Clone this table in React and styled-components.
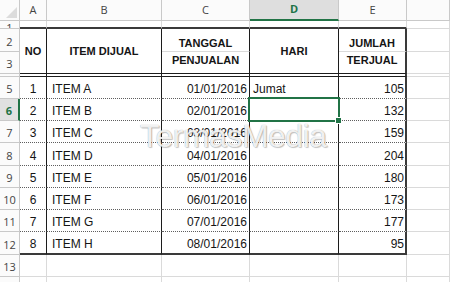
import React from 'react';
import styled, { createGlobalStyle } from 'styled-components';

const GREEN = '#217346';

const LINE = {
  grid: '1px solid #dadada',
  head: '1px solid #c9c9c9',
  dark: '1px solid #1c1c1c',
  dot: '1px dotted #5e5e5e',
  heavy: '2px solid #3a3a3a',
  green: `2px solid ${GREEN}`,
};

const items = [
  [1, 'ITEM A', '01/01/2016', 'Jumat', 105],
  [2, 'ITEM B', '02/01/2016', '', 132],
  [3, 'ITEM C', '03/01/2016', '', 159],
  [4, 'ITEM D', '04/01/2016', '', 204],
  [5, 'ITEM E', '05/01/2016', '', 180],
  [6, 'ITEM F', '06/01/2016', '', 173],
  [7, 'ITEM G', '07/01/2016', '', 177],
  [8, 'ITEM H', '08/01/2016', '', 95],
];

const GlobalStyle = createGlobalStyle`
  html, body {
    margin: 0;
    background: #ffffff;
    overflow: hidden;
  }
`;

const Page = styled.div`
  position: relative;
  width: 450px;
  height: 282px;
  overflow: hidden;
  font-family: "Liberation Sans", Arial, sans-serif;
`;

const Sheet = styled.div`
  display: grid;
  grid-template-columns: 20px 27px 115px 88px 89px 68px 43px;
  grid-template-rows: 21px 8px 23px 22px 3px 22px 22px 22px 23px 22px 22px 22px 23px 22px 22px;
`;

const Corner = styled.div`
  display: flex;
  align-items: flex-end;
  justify-content: flex-end;
  padding: 0 2px 2px 0;
  background: #fbfbfb;
  border-right: ${LINE.head};
  border-bottom: ${LINE.head};
`;

const ColHead = styled.div`
  display: flex;
  align-items: flex-end;
  justify-content: center;
  padding-bottom: 3px;
  font-family: "Open Sans", "Liberation Sans", sans-serif;
  font-size: 11px;
  font-weight: ${(p) => (p.$active ? 700 : 400)};
  color: ${(p) => (p.$active ? GREEN : '#444')};
  background: ${(p) => (p.$active ? '#dedede' : '#fbfbfb')};
  border-right: ${LINE.head};
  border-bottom: ${(p) => (p.$active ? LINE.green : LINE.head)};
`;

const RowHead = styled.div`
  display: flex;
  align-items: ${(p) => (p.$clip ? 'flex-start' : 'flex-end')};
  justify-content: center;
  padding-bottom: ${(p) => (p.$clip ? 0 : 2)}px;
  overflow: hidden;
  font-family: "Open Sans", "Liberation Sans", sans-serif;
  font-size: 11px;
  line-height: 14px;
  font-weight: ${(p) => (p.$active ? 700 : 400)};
  color: ${(p) => (p.$active ? GREEN : '#444')};
  background: ${(p) => (p.$active ? '#e1e1e1' : '#fbfbfb')};
  border-right: ${(p) => (p.$active ? LINE.green : LINE.head)};
  border-bottom: ${LINE.head};
`;

const Cell = styled.div`
  position: relative;
  display: flex;
  align-items: ${(p) => (p.$v === 'start' ? 'flex-start' : p.$v === 'center' ? 'center' : 'flex-end')};
  justify-content: ${(p) => (p.$align === 'right' ? 'flex-end' : p.$align === 'center' ? 'center' : 'flex-start')};
  padding: ${(p) => (p.$v === 'start' ? '2px' : '0')} ${(p) => p.$pr ?? 0}px
    ${(p) => (p.$v === 'start' || p.$v === 'center' ? '0' : '2px')} ${(p) => p.$pl ?? 0}px;
  grid-row: ${(p) => (p.$span ? 'span 2' : 'auto')};
  border-right: ${(p) => LINE[p.$r || 'grid']};
  border-bottom: ${(p) => LINE[p.$b || 'grid']};
  font-size: ${(p) => (p.$bold ? 11 : 12)}px;
  font-weight: ${(p) => (p.$bold ? 700 : 400)};
  color: #151515;
  white-space: nowrap;
  overflow: visible;
`;

const Selection = styled.div`
  position: absolute;
  top: -2px;
  left: -2px;
  right: -2px;
  bottom: -2px;
  border: ${LINE.green};
  pointer-events: none;
  z-index: 2;
`;

const Handle = styled.span`
  position: absolute;
  right: -4px;
  bottom: -4px;
  width: 5px;
  height: 5px;
  background: ${GREEN};
  border: 1px solid #ffffff;
`;

const Watermark = styled.div`
  position: absolute;
  left: 140px;
  top: 118px;
  font-family: "Liberation Sans", Arial, sans-serif;
  font-size: 32px;
  letter-spacing: -0.5px;
  color: rgba(255, 255, 255, 0.9);
  text-shadow: 0 0 1px rgba(0, 0, 0, 0.4), 1px 1px 1px rgba(0, 0, 0, 0.2);
  pointer-events: none;
`;

const CornerMark = () => (
  <svg width="11" height="11" viewBox="0 0 11 11">
    <polygon points="11,0 11,11 0,11" fill="#dcdcdc" />
  </svg>
);

const Empty = ({ n, b }) =>
  Array.from({ length: n }).map((_, i) => <Cell key={i} $b={b} />);

const App = () => {
  return (
    <Page>
      <GlobalStyle />
      <Sheet>
        {/* column headers */}
        <Corner>
          <CornerMark />
        </Corner>
        <ColHead>A</ColHead>
        <ColHead>B</ColHead>
        <ColHead>C</ColHead>
        <ColHead $active>D</ColHead>
        <ColHead>E</ColHead>
        <ColHead />

        {/* row 1 (squashed) */}
        <RowHead $clip>1</RowHead>
        <Cell $b="heavy" />
        <Cell $b="heavy" />
        <Cell $b="heavy" />
        <Cell $b="heavy" />
        <Cell $b="heavy" />
        <Cell />

        {/* rows 2-3: table header */}
        <RowHead>2</RowHead>
        <Cell $span $bold $align="center" $v="center" $r="dark" $b="dark">NO</Cell>
        <Cell $span $bold $align="center" $v="center" $r="dark" $b="dark">ITEM DIJUAL</Cell>
        <Cell $bold $align="center" $r="dark">TANGGAL</Cell>
        <Cell $span $bold $align="center" $v="center" $r="dark" $b="dark">HARI</Cell>
        <Cell $bold $align="center" $r="heavy">JUMLAH</Cell>
        <Cell />

        <RowHead>3</RowHead>
        <Cell $bold $align="center" $v="start" $r="dark" $b="dark">PENJUALAN</Cell>
        <Cell $bold $align="center" $v="start" $r="heavy" $b="dark">TERJUAL</Cell>
        <Cell />

        {/* row 4 (hidden) */}
        <RowHead />
        <Cell $r="dark" $b="dark" />
        <Cell $r="dark" $b="dark" />
        <Cell $r="dark" $b="dark" />
        <Cell $r="dark" $b="dark" />
        <Cell $r="heavy" $b="dark" />
        <Cell />

        {items.map(([no, name, date, day, qty], i) => {
          const last = i === items.length - 1;
          const b = last ? 'heavy' : 'dot';
          const selected = i === 1;
          return (
            <React.Fragment key={no}>
              <RowHead $active={selected}>{i + 5}</RowHead>
              <Cell $align="center" $r="dark" $b={b}>{no}</Cell>
              <Cell $pl={5} $r="dark" $b={b}>{name}</Cell>
              <Cell $align="right" $pr={2} $r="dark" $b={b}>{date}</Cell>
              <Cell $pl={3} $r="dark" $b={b}>
                {day}
                {selected && (
                  <Selection>
                    <Handle />
                  </Selection>
                )}
              </Cell>
              <Cell $align="right" $pr={1} $r="heavy" $b={b}>{qty}</Cell>
              <Cell />
            </React.Fragment>
          );
        })}

        <RowHead>13</RowHead>
        <Empty n={6} />
        <RowHead>14</RowHead>
        <Empty n={6} />
      </Sheet>
      <Watermark>TermasMedia</Watermark>
    </Page>
  );
};

export default App;
